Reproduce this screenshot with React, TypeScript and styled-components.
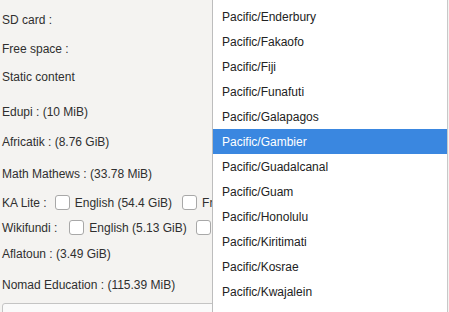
import styled, { createGlobalStyle } from "styled-components";

const GlobalStyle = createGlobalStyle`
  html, body {
    margin: 0;
    padding: 0;
    background: #f4f3f1;
  }
  body {
    font: 12px/14px "Liberation Sans", Arial, sans-serif;
    color: #2f2f2f;
  }
`;

const Page = styled.div`
  position: relative;
  width: 449px;
  height: 312px;
  overflow: hidden;
`;

const Form = styled.div`
  padding-left: 2px;
  display: flex;
  flex-direction: column;
`;

const Row = styled.div<{ $top: number; $tall?: boolean }>`
  margin-top: ${(p) => p.$top}px;
  height: ${(p) => (p.$tall ? 15 : 14)}px;
  display: flex;
  align-items: center;
  white-space: nowrap;
  line-height: 14px;
`;

const Checkbox = styled.span<{ $left: number }>`
  box-sizing: border-box;
  flex: none;
  width: 15px;
  height: 15px;
  margin-left: ${(p) => p.$left}px;
  margin-right: 5px;
  border: 1px solid #a8a8a8;
  border-radius: 3px;
  background: #fff;
`;

const Choice = styled.span``;

const Field = styled.div`
  margin-top: 11px;
  height: 30px;
  width: 230px;
  box-sizing: border-box;
  border: 1px solid #c4c4c4;
  border-radius: 3px;
  background: #fafafa;
`;

const Menu = styled.ul`
  position: absolute;
  top: 0;
  left: 212px;
  width: 236px;
  height: 312px;
  box-sizing: border-box;
  margin: 0;
  padding: 4px 0 0;
  list-style: none;
  background: #fff;
  border-left: 1px solid #bdbdbd;
  border-right: 1px solid #c8c8c8;
  overflow: hidden;
`;

const Item = styled.li<{ $active?: boolean }>`
  height: 25px;
  flex: none;
  padding-left: 9px;
  display: flex;
  align-items: center;
  color: ${(p) => (p.$active ? "#fff" : "#222")};
  background: ${(p) => (p.$active ? "#3a87e0" : "transparent")};
`;

const zones = [
  "Enderbury",
  "Fakaofo",
  "Fiji",
  "Funafuti",
  "Galapagos",
  "Gambier",
  "Guadalcanal",
  "Guam",
  "Honolulu",
  "Kiritimati",
  "Kosrae",
  "Kwajalein",
  "Majuro",
];

const App = () => {
  return (
    <Page>
      <GlobalStyle />
      <Form>
        <Row $top={13}>SD card :</Row>
        <Row $top={15}>Free space :</Row>
        <Row $top={14}>Static content</Row>
        <Row $top={21}>Edupi : (10 MiB)</Row>
        <Row $top={16}>Africatik : (8.76 GiB)</Row>
        <Row $top={18}>Math Mathews : (33.78 MiB)</Row>
        <Row $top={14} $tall>
          KA Lite :
          <Checkbox $left={8} />
          <Choice>English (54.4 GiB)</Choice>
          <Checkbox $left={10} />
          <Choice>Français</Choice>
        </Row>
        <Row $top={10} $tall>
          Wikifundi :
          <Checkbox $left={12} />
          <Choice>English (5.13 GiB)</Choice>
          <Checkbox $left={9} />
          <Choice>Français</Choice>
        </Row>
        <Row $top={12}>Aflatoun : (3.49 GiB)</Row>
        <Row $top={17}>Nomad Education : (115.39 MiB)</Row>
        <Field />
      </Form>
      <Menu>
        {zones.map((z) => (
          <Item key={z} $active={z === "Gambier"}>
            Pacific/{z}
          </Item>
        ))}
      </Menu>
    </Page>
  );
};

export default App;
